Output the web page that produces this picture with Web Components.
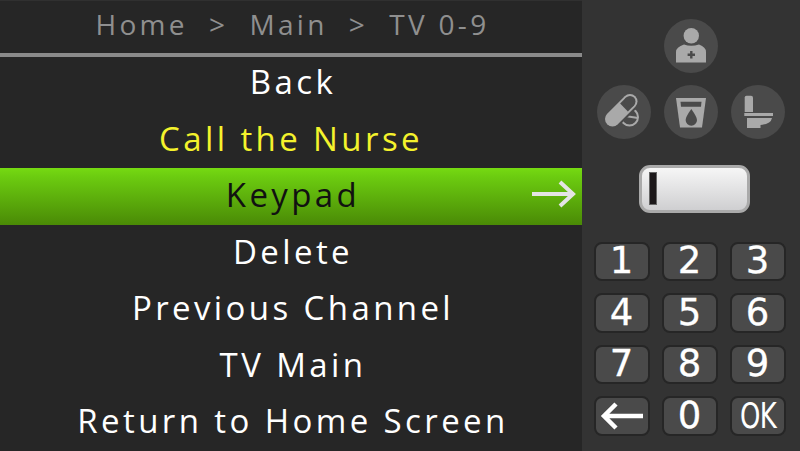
<!DOCTYPE html>
<html><head><meta charset="utf-8"><style>
html,body{margin:0;padding:0;background:#333}
tv-app{width:800px;height:451px}
</style></head><body>
<tv-app>
  <bread-crumb slot="head">Home&nbsp; &gt; &nbsp;Main&nbsp; &gt; &nbsp;TV 0-9</bread-crumb>
  <menu-row slot="menu">Back</menu-row>
  <menu-row slot="menu" kind="alert">Call the Nurse</menu-row>
  <menu-row slot="menu" kind="active">Keypad</menu-row>
  <menu-row slot="menu">Delete</menu-row>
  <menu-row slot="menu">Previous Channel</menu-row>
  <menu-row slot="menu">TV Main</menu-row>
  <menu-row slot="menu">Return to Home Screen</menu-row>
  <side-panel slot="side"></side-panel>
</tv-app>
<script>
const def=(n,css,html)=>customElements.define(n,class extends HTMLElement{
  constructor(){super();this.attachShadow({mode:'open'}).innerHTML=`<style>${css}</style>${html}`;}
});
def('tv-app',`
:host{display:grid;grid-template-columns:582px 218px;overflow:hidden;font-family:"Open Sans",sans-serif}
.l{background:#262626;display:flex;flex-direction:column;height:451px;overflow:hidden;box-sizing:border-box;border-top:1px solid #303030}
.h{border-bottom:4px solid #8a8a8a;box-sizing:border-box;height:56px}
.m{display:flex;flex-direction:column;margin-top:-2px}
`,`<div class="l"><div class="h"><slot name="head"></slot></div><div class="m"><slot name="menu"></slot></div></div><slot name="side"></slot>`);
def('bread-crumb',`:host{display:block;text-align:center;color:#8f8f8f;font-size:28px;letter-spacing:3.3px;line-height:47px;white-space:nowrap;padding-left:3px}`,`<slot></slot>`);
customElements.define('menu-row',class extends HTMLElement{
  constructor(){super();const k=this.getAttribute('kind');
  this.attachShadow({mode:'open'}).innerHTML=`<style>
  :host{display:flex;align-items:center;justify-content:center;box-sizing:border-box;height:56.5px;padding:0 0 3px 4px;color:#fff;font-size:33px;letter-spacing:3.4px;white-space:nowrap;position:relative}
  :host([kind=alert]){color:#f4f22c;padding-left:0}
  :host([kind=active]){color:#111;background:linear-gradient(#76da12,#6ccc10 15%,#4a8a06)}
  svg{position:absolute;right:4px;top:50%;margin-top:-16px}
  </style><slot></slot>${k==='active'?`<svg width="46" height="28" viewBox="0 0 46 28"><path d="M0 14H41M28 2L41 14L28 26" fill="none" stroke="#e4e4e4" stroke-width="4"/></svg>`:''}`;}
});
const g='#a9a9a9',d='#4a4a4a';
customElements.define('icon-btn',class extends HTMLElement{
  constructor(){super();const ic={
   nurse:`<circle cx="27.300" cy="16.700" r="7.700" fill="${g}"/><path d="M12 43.500V33Q12 28 20 25.500Q27 28 35 25.500Q42 28 42 33V43.500Z" fill="${g}"/><path d="M27.300 32V39.400M23.600 35.700H31" stroke="${d}" stroke-width="2.400"/>`,
   pill:`<circle cx="32.500" cy="32" r="8.500" fill="${d}" stroke="${g}" stroke-width="2"/><path d="M25 30.500L41 33" stroke="${g}" stroke-width="2"/><path d="M15.500 34L33 16.500" stroke="${d}" stroke-width="19" stroke-linecap="round"/><path d="M15.500 34L33 16.500" stroke="${g}" stroke-width="15" stroke-linecap="round"/><path d="M27 22.500L33 16.500" stroke="${d}" stroke-width="11"/><circle cx="33" cy="16.500" r="5.500" fill="${d}"/>`,
   water:`<path d="M12 13H42L38 42.500H16Z" fill="${g}"/><path d="M16.500 16.700H37.500L37 21.700H17Z" fill="${d}"/><path d="M27.300 24Q33 32 33 35A5.700 5.700 0 0 1 21.600 35Q21.600 32 27.300 24Z" fill="${d}"/>`,
   toilet:`<path d="M13.700 12.500Q13.700 10.700 15.500 10.700H20Q22 10.700 22 12.500V27H13.700Z" fill="${g}"/><path d="M13.300 28H42V31H13.300Z" fill="${g}"/><path d="M16 33H41Q40 39 29.500 40V43H16Z" fill="${g}"/>`
  };
  this.attachShadow({mode:'open'}).innerHTML=`<style>:host{display:block;width:54px;height:54px;border-radius:50%;background:${d}}svg{display:block}</style><svg width="54" height="54" viewBox="0 0 54 54">${ic[this.getAttribute('i')]}</svg>`;}
});
def('num-key',`:host{display:flex;align-items:center;justify-content:center;box-sizing:border-box;height:39.500px;border:2px solid #262626;border-radius:8px;background:#4a4a4a;color:#fff;font:37px/30px "DejaVu Sans",sans-serif;-webkit-text-stroke:.3px #fff}
.s{display:inline-block}:host([ok]) .s{transform:scaleX(.72);letter-spacing:-1px;font-size:36px;-webkit-text-stroke:0}`,`<span class="s"><slot></slot></span>`);
def('side-panel',`
:host{display:flex;flex-direction:column;align-items:stretch;background:#333;height:451px;box-sizing:border-box;padding-top:18px}
.ic{display:grid;grid-template-columns:repeat(3,54px);column-gap:13px;row-gap:12px;padding:1px 0 0 15px}
.top{grid-column:2}
.disp{align-self:flex-start;margin:25.500px 0 0 57px;width:110.500px;height:48px;box-sizing:border-box;border:3.500px solid #aaa;border-radius:11px;background:linear-gradient(#f6f6f6,#cfcfd1);display:flex;align-items:center;padding-left:6.500px}
.cur{width:8px;height:33px;background:#1c181a;border:1px solid #666;box-sizing:border-box}
.keys{display:grid;grid-template-columns:repeat(3,56px);column-gap:12px;row-gap:12px;margin:29px 0 0 11.500px}
svg{display:block}
`,`<div class="ic"><icon-btn class="top" i="nurse"></icon-btn><span></span><icon-btn i="pill"></icon-btn><icon-btn i="water"></icon-btn><icon-btn i="toilet"></icon-btn></div>
<div class="disp"><div class="cur"></div></div>
<div class="keys"><num-key>1</num-key><num-key>2</num-key><num-key>3</num-key><num-key>4</num-key><num-key>5</num-key><num-key>6</num-key><num-key>7</num-key><num-key>8</num-key><num-key>9</num-key>
<num-key><svg width="44" height="28" viewBox="0 0 44 28"><path d="M43 14H4M16 2L4 14L16 26" fill="none" stroke="#fff" stroke-width="4.500"/></svg></num-key><num-key>0</num-key><num-key ok>OK</num-key></div>`);
</script>
</body></html>
